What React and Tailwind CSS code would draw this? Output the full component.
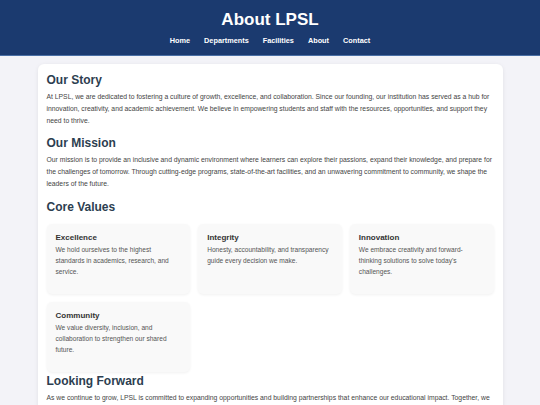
import * as React from "react";

const navLinks = ["Home", "Departments", "Facilities", "About", "Contact"];

const values = [
  {
    title: "Excellence",
    text: "We hold ourselves to the highest standards in academics, research, and service.",
  },
  {
    title: "Integrity",
    text: "Honesty, accountability, and transparency guide every decision we make.",
  },
  {
    title: "Innovation",
    text: "We embrace creativity and forward-thinking solutions to solve today's challenges.",
  },
  {
    title: "Community",
    text: "We value diversity, inclusion, and collaboration to strengthen our shared future.",
  },
];

const Heading = ({ children, className = "" }) => (
  <h2 className={"text-[12px] leading-[14px] font-bold text-[#2c3e50] " + className}>{children}</h2>
);

const Para = ({ children, className = "" }) => (
  <p className={"text-[6.8px] leading-[12px] text-[#444] " + className}>{children}</p>
);

const App = () => {
  return (
    <div className="min-h-screen bg-[#f3f3f8] font-['Liberation_Sans',Arial,sans-serif]">
      <header className="bg-[#1b3a6f] border-b border-[#4a6fa5] pt-[10px] pb-[8px] text-center text-white">
        <h1 className="text-[17px] leading-[20px] font-bold">About LPSL</h1>
        <nav className="mt-[5px] flex justify-center gap-[14px] text-[7.3px] leading-[12px] font-bold">
          {navLinks.map((l) => (
            <a key={l} href="#">{l}</a>
          ))}
        </nav>
      </header>

      <main className="pt-[8px] pb-[20px]">
        <div className="mx-auto w-[465px] bg-white rounded-[6px] shadow-[0_1px_4px_rgba(0,0,0,0.08)] px-[9px] pt-[9px] pb-[12px]">
          <Heading>Our Story</Heading>
          <Para className="mt-[4px]">
            At LPSL, we are dedicated to fostering a culture of growth, excellence, and collaboration. Since our founding, our
            institution has served as a hub for innovation, creativity, and academic achievement. We believe in empowering
            students and staff with the resources, opportunities, and support they need to thrive.
          </Para>

          <Heading className="mt-[9px]">Our Mission</Heading>
          <Para className="mt-[4px]">
            Our mission is to provide an inclusive and dynamic environment where learners can explore their passions, expand
            their knowledge, and prepare for the challenges of tomorrow. Through cutting-edge programs, state-of-the-art
            facilities, and an unwavering commitment to community, we shape the leaders of the future.
          </Para>

          <Heading className="mt-[10px]">Core Values</Heading>
          <div className="mt-[10px] grid grid-cols-3 gap-[8px]">
            {values.map((v) => (
              <div
                key={v.title}
                className="h-[70px] bg-[#f9f9f9] rounded-[5px] shadow-[0_1px_3px_rgba(0,0,0,0.06)] px-[9px] pt-[9px]"
              >
                <h3 className="text-[8px] leading-[10px] font-bold text-[#333]">{v.title}</h3>
                <p className="mt-[1px] text-[6.6px] leading-[11px] text-[#555]">{v.text}</p>
              </div>
            ))}
          </div>

          <Heading className="mt-[2px]">Looking Forward</Heading>
          <Para className="mt-[4px]">
            As we continue to grow, LPSL is committed to expanding opportunities and building partnerships that enhance our
            educational impact. Together, we will continue to inspire, innovate, and lead.
          </Para>
        </div>
      </main>
    </div>
  );
};

export default App;
